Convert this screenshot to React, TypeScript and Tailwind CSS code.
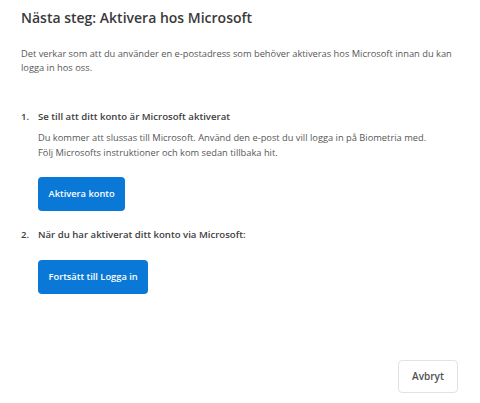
export default function App() {
  return (
    <div className="relative h-[403px] w-[480px] bg-white font-['Open_Sans',sans-serif] text-[#575757]">
      <div className="px-[21px] pt-[8px]">
        <h1 className="text-[14px] font-semibold leading-[20px] text-[#3a3a3a]">
          Nästa steg: Aktivera hos Microsoft
        </h1>
        <p className="mt-[19px] text-[9.3px] leading-[14px]">
          Det verkar som att du använder en e-postadress som behöver aktiveras hos Microsoft innan du kan
          logga in hos oss.
        </p>

        <ol className="mt-[35px]">
          <li className="flex">
            <span className="w-[17px] shrink-0 text-[9.6px] font-semibold leading-[14px] text-[#404040]">1.</span>
            <div>
              <p className="text-[9.6px] font-semibold leading-[14px] text-[#404040]">
                Se till att ditt konto är Microsoft aktiverat
              </p>
              <p className="mt-[6px] text-[9.3px] leading-[15px]">
                Du kommer att slussas till Microsoft. Använd den e-post du vill logga in på Biometria med.
                <br />
                Följ Microsofts instruktioner och kom sedan tillbaka hit.
              </p>
              <button className="mt-[17px] h-[34px] rounded-[4px] bg-[#0a78d6] px-[10.5px] text-[9.3px] font-semibold text-white">
                Aktivera konto
              </button>
            </div>
          </li>
          <li className="mt-[17px] flex">
            <span className="w-[17px] shrink-0 text-[9.6px] font-semibold leading-[14px] text-[#404040]">2.</span>
            <div>
              <p className="text-[9.6px] font-semibold leading-[14px] text-[#404040]">
                När du har aktiverat ditt konto via Microsoft:
              </p>
              <button className="mt-[18px] h-[34px] rounded-[4px] bg-[#0a78d6] px-[10.5px] text-[9.3px] font-semibold text-white">
                Fortsätt till Logga in
              </button>
            </div>
          </li>
        </ol>
      </div>

      <div className="absolute right-[22px] top-[360px]">
        <button className="h-[33px] w-[60px] rounded-[4px] border border-[#e2e2e2] bg-white text-[10px] font-semibold text-[#505050]">
          Avbryt
        </button>
      </div>
    </div>
  );
}
